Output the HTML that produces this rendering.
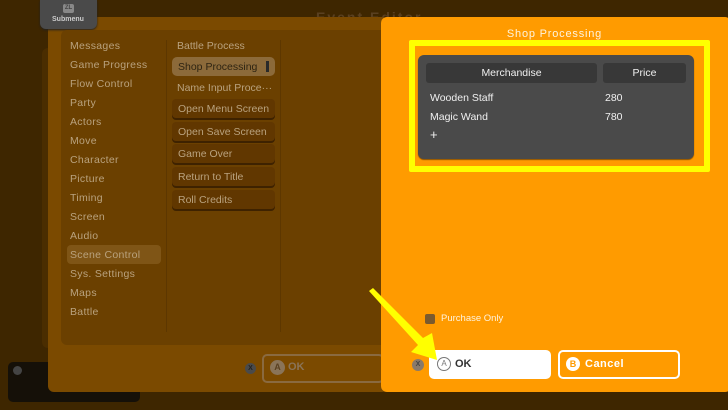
<!DOCTYPE html>
<html><head><meta charset="utf-8"><style>
*{margin:0;padding:0;box-sizing:border-box}
body{width:728px;height:410px;overflow:hidden;background:#3e2600;font-family:"Liberation Sans",sans-serif;position:relative}
.a{position:absolute}
.lt{position:absolute;left:70px;color:#b9a27e;font-size:10.5px;letter-spacing:.3px}
.mt{position:absolute;left:177px;color:#b9a27e;font-size:10.5px}
.mb{position:absolute;left:172px;width:103px;height:19px;background:#613700;border-radius:4px;box-shadow:0 2px 0 #3e2200;color:#b9a27e;font-size:10.5px;padding:4px 0 0 6px}
.w{color:#f0f0f0;font-size:10.5px}
</style></head><body>
<div class="a" style="left:8px;top:362px;width:132px;height:40px;background:#151008;border-radius:5px"></div>
<div class="a" style="left:13px;top:366px;width:9px;height:9px;border-radius:50%;background:#444"></div>
<div class="a" style="left:42px;top:48px;width:20px;height:300px;background:#4a2d00;border-radius:6px"></div>
<div class="a" style="left:316px;top:9px;color:#5a4020;font-size:14px;font-weight:bold;letter-spacing:2px">Event Editor</div>
<div class="a" style="left:48px;top:17px;width:340px;height:375px;background:#7b4a00;border-radius:6px"></div>
<div class="a" style="left:40px;top:0;width:57px;height:29px;background:#4a4a4a;border-radius:0 0 6px 6px;box-shadow:0 1px 2px #222"></div>
<div class="a" style="left:63px;top:4px;width:11px;height:9px;background:#888;border-radius:2px;font-size:6px;color:#444;text-align:center;font-weight:bold;line-height:9px">ZL</div>
<div class="a" style="left:52px;top:16px;color:#ccc;font-size:7px;font-weight:bold">Submenu</div>
<div class="a" style="left:61px;top:30px;width:330px;height:315px;background:#6b4000;border-radius:6px"></div>
<div class="a" style="left:166px;top:40px;width:1px;height:292px;background:#5d3700"></div>
<div class="a" style="left:280px;top:40px;width:1px;height:292px;background:#5d3700"></div>
<div class="a" style="left:67px;top:245px;width:94px;height:19px;background:#7f5516;border-radius:4px"></div>
<div class="lt" style="top:40px">Messages</div><div class="lt" style="top:59px">Game Progress</div><div class="lt" style="top:78px">Flow Control</div><div class="lt" style="top:97px">Party</div><div class="lt" style="top:116px">Actors</div><div class="lt" style="top:135px">Move</div><div class="lt" style="top:154px">Character</div><div class="lt" style="top:173px">Picture</div><div class="lt" style="top:192px">Timing</div><div class="lt" style="top:211px">Screen</div><div class="lt" style="top:230px">Audio</div><div class="lt" style="top:249px">Scene Control</div><div class="lt" style="top:268px">Sys. Settings</div><div class="lt" style="top:287px">Maps</div><div class="lt" style="top:306px">Battle</div>
<div class="mt" style="top:40px">Battle Process</div>
<div class="a" style="left:172px;top:57px;width:103px;height:19px;background:#8c6a3a;border-radius:5px;color:#2e2412;font-size:10.5px;padding:4px 0 0 6px">Shop Processing<span style="position:absolute;right:6px;top:4px;width:3px;height:11px;background:#2a2a2a"></span></div>
<div class="mt" style="top:82px">Name Input Proce···</div>
<div class="mb" style="top:99px">Open Menu Screen</div><div class="mb" style="top:122px">Open Save Screen</div><div class="mb" style="top:144px">Game Over</div><div class="mb" style="top:167px">Return to Title</div><div class="mb" style="top:190px">Roll Credits</div>
<div class="a" style="left:245px;top:363px;width:11px;height:11px;border-radius:50%;background:#4a4a4a;color:#222;font-size:7px;text-align:center;line-height:11px;font-weight:bold">X</div>
<div class="a" style="left:262px;top:354px;width:122px;height:29px;border:2px solid #8a6a40;border-radius:5px"></div>
<div class="a" style="left:270px;top:360px;width:15px;height:15px;border-radius:50%;background:#8a7458;color:#5a4020;font-size:9px;text-align:center;line-height:15px;font-weight:bold">A</div>
<div class="a" style="left:288px;top:361px;color:#8a7458;font-size:11px;font-weight:bold">OK</div>

<div class="a" style="left:381px;top:17px;width:350px;height:375px;background:#ff9b00;border-radius:6px"></div>
<div class="a" style="left:381px;top:28px;width:347px;text-align:center;color:#fff3dd;font-size:11px;letter-spacing:.8px">Shop Processing</div>
<div class="a" style="left:409px;top:40px;width:301px;height:132px;border:6px solid #ffff00;border-radius:2px"></div>
<div class="a" style="left:418px;top:55px;width:276px;height:104px;background:#4a4a4a;border-radius:6px;box-shadow:0 1px 1px #8a5000"></div>
<div class="a w" style="left:426px;top:63px;width:171px;height:20px;background:#383838;border-radius:3px;text-align:center;line-height:20px">Merchandise</div>
<div class="a w" style="left:603px;top:63px;width:83px;height:20px;background:#383838;border-radius:3px;text-align:center;line-height:20px">Price</div>
<div class="a w" style="left:430px;top:92px">Wooden Staff</div><div class="a w" style="left:605px;top:92px">280</div>
<div class="a w" style="left:430px;top:111px">Magic Wand</div><div class="a w" style="left:605px;top:111px">780</div>
<div class="a w" style="left:430px;top:127px;font-size:13px">+</div>
<div class="a" style="left:425px;top:314px;width:10px;height:10px;background:#7a5a2e;border-radius:2px"></div>
<div class="a" style="left:441px;top:313px;color:#fff3dd;font-size:9.5px">Purchase Only</div>
<div class="a" style="left:412px;top:359px;width:12px;height:12px;border-radius:50%;background:#8a7a6a;color:#444;font-size:7px;text-align:center;line-height:12px;font-weight:bold">X</div>
<div class="a" style="left:429px;top:350px;width:122px;height:29px;background:#fff;border-radius:5px"></div>
<div class="a" style="left:437px;top:357px;width:14px;height:14px;border-radius:50%;border:1px solid #777;color:#777;font-size:8px;text-align:center;line-height:12px">A</div>
<div class="a" style="left:455px;top:358px;color:#333;font-size:11px;font-weight:bold">OK</div>
<div class="a" style="left:558px;top:350px;width:122px;height:29px;border:2px solid #fff;border-radius:5px"></div>
<div class="a" style="left:566px;top:357px;width:14px;height:14px;border-radius:50%;background:#fff;color:#ff9b00;font-size:9px;text-align:center;line-height:14px;font-weight:bold">B</div>
<div class="a" style="left:585px;top:358px;color:#fff;font-size:11px;font-weight:bold;letter-spacing:.5px">Cancel</div>
<svg class="a" style="left:0;top:0" width="728" height="410"><polygon points="369,291 373,288 423,338 432,333 437,360 411,352 418,345" fill="#ffff00"/></svg>
</body></html>
